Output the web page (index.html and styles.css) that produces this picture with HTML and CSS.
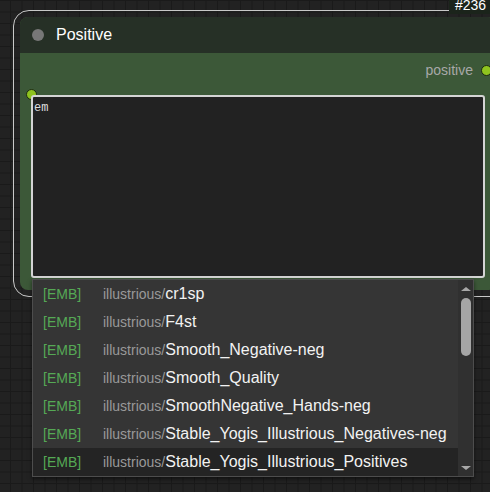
FILE: index.html
```html
<!DOCTYPE html>
<html>
<head>
<meta charset="utf-8">
<link rel="stylesheet" href="styles.css">
</head>
<body>
<div class="canvas">
  <div class="selection"></div>
  <div class="node">
    <div class="node-title">
      <span class="title-dot"></span>
      <span class="title-text">Positive</span>
    </div>
    <div class="output-row">
      <span class="slot-label">positive</span>
      <span class="slot-dot out"></span>
    </div>
    <span class="slot-dot in"></span>
    <div class="textarea">em</div>
  </div>
  <div class="badge">#236</div>
  <div class="dropdown">
    <div class="list">
      <div class="row"><span class="tag">[EMB]</span><span class="prefix">illustrious/</span><span class="name">cr1sp</span></div>
      <div class="row"><span class="tag">[EMB]</span><span class="prefix">illustrious/</span><span class="name">F4st</span></div>
      <div class="row"><span class="tag">[EMB]</span><span class="prefix">illustrious/</span><span class="name">Smooth_Negative-neg</span></div>
      <div class="row"><span class="tag">[EMB]</span><span class="prefix">illustrious/</span><span class="name">Smooth_Quality</span></div>
      <div class="row"><span class="tag">[EMB]</span><span class="prefix">illustrious/</span><span class="name">SmoothNegative_Hands-neg</span></div>
      <div class="row"><span class="tag">[EMB]</span><span class="prefix">illustrious/</span><span class="name">Stable_Yogis_Illustrious_Negatives-neg</span></div>
      <div class="row active"><span class="tag">[EMB]</span><span class="prefix">illustrious/</span><span class="name">Stable_Yogis_Illustrious_Positives</span></div>
    </div>
    <div class="scrollbar">
      <span class="arrow up"></span>
      <span class="thumb"></span>
      <span class="spacer"></span>
      <span class="arrow down"></span>
    </div>
  </div>
</div>
</body>
</html>
```
FILE: styles.css
```css
html, body {
  margin: 0;
  padding: 0;
  width: 490px;
  height: 492px;
  overflow: hidden;
}
body {
  background-color: #222;
  background-image:
    linear-gradient(to right, #1a1a1a 1px, transparent 1px),
    linear-gradient(to bottom, #1a1a1a 1px, transparent 1px);
  background-size: 11.5px 11.5px;
  background-position: 10px 0px;
  font-family: "Liberation Sans", Arial, sans-serif;
}
.canvas {
  position: relative;
  width: 490px;
  height: 492px;
}
.selection {
  position: absolute;
  left: 13px;
  top: 10px;
  width: 500px;
  height: 285px;
  border: 1.5px solid #c8c8c8;
  border-radius: 16px;
}
.node {
  position: absolute;
  left: 20px;
  top: 17px;
  width: 476px;
  height: 273px;
  background: #3c5838;
  border-radius: 8px;
  display: flex;
  flex-direction: column;
}
.node-title {
  height: 36px;
  background: #263026;
  border-radius: 8px 8px 0 0;
  display: flex;
  align-items: center;
  padding-left: 12px;
  gap: 12px;
  flex: none;
}
.title-dot {
  width: 12px;
  height: 12px;
  border-radius: 50%;
  background: #777;
}
.title-text {
  color: #fff;
  font-size: 16px;
}
.output-row {
  margin-top: 7px;
  height: 20px;
  display: flex;
  align-items: center;
  justify-content: flex-end;
  padding-right: 4px;
  gap: 8px;
}
.slot-label {
  color: #a8a8a8;
  font-size: 14px;
}
.slot-dot {
  width: 9px;
  height: 9px;
  border-radius: 50%;
  background: #8fc31f;
  border: 1px solid #1c2a12;
  display: block;
}
.slot-dot.in {
  position: absolute;
  left: 6px;
  top: 72px;
}
.textarea {
  position: relative;
  margin-top: 15px;
  margin-left: 11px;
  width: 454px;
  height: 183px;
  box-sizing: border-box;
  background: #222;
  border: 2px solid #d4d4d4;
  border-radius: 3px;
  color: #ddd;
  font-family: "Liberation Mono", monospace;
  font-size: 12px;
  line-height: 14px;
  padding: 4px 1px;
}
.badge {
  position: absolute;
  left: 449px;
  top: -4px;
  width: 41px;
  height: 18px;
  background: #1b241b;
  color: #fff;
  font-size: 14px;
  line-height: 18px;
  padding-left: 6px;
  box-sizing: border-box;
  white-space: nowrap;
}
.dropdown {
  position: absolute;
  left: 32px;
  top: 279px;
  width: 442px;
  height: 198px;
  box-sizing: border-box;
  border: 1px solid #4d4d4d;
  background: #353535;
  display: flex;
  box-shadow: 0 2px 4px rgba(0,0,0,0.5);
}
.list {
  flex: 1;
  display: flex;
  flex-direction: column;
}
.row {
  height: 28px;
  display: flex;
  align-items: baseline;
  line-height: 28px;
  padding-left: 10px;
  white-space: nowrap;
}
.row.active {
  background: #242424;
}
.tag {
  color: #55a955;
  font-size: 14px;
  width: 60px;
  flex: none;
}
.prefix {
  color: #999;
  font-size: 14px;
}
.name {
  color: #f2f2f2;
  font-size: 16px;
}
.scrollbar {
  width: 15px;
  background: #303030;
  display: flex;
  flex-direction: column;
  align-items: center;
  padding: 7px 0 6px;
  box-sizing: border-box;
}
.arrow {
  width: 0;
  height: 0;
  border-left: 5px solid transparent;
  border-right: 5px solid transparent;
  display: block;
}
.arrow.up {
  border-bottom: 4px solid #a8a8a8;
}
.arrow.down {
  border-top: 4px solid #a8a8a8;
}
.thumb {
  margin-top: 7px;
  width: 10px;
  height: 58px;
  border-radius: 5px;
  background: #a5a5a5;
  display: block;
}
.spacer {
  flex: 1;
}
```
